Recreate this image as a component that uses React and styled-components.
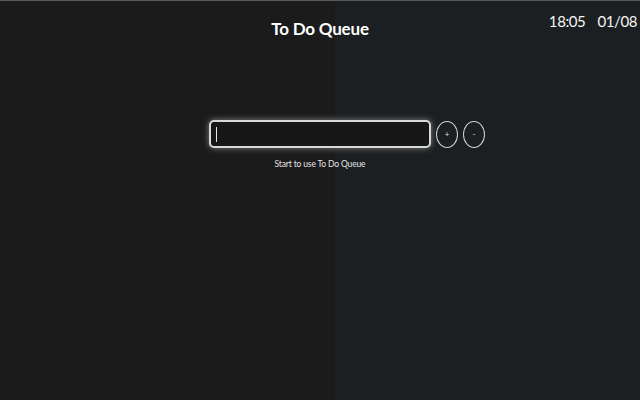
import styled, { createGlobalStyle } from "styled-components";

const GlobalStyle = createGlobalStyle`
  html, body {
    margin: 0;
    height: 100%;
  }
  body {
    background: linear-gradient(to right, #1b1b1b 0, #1b1b1b 335px, #1c1f21 335px);
    font-family: Lato, "Open Sans", sans-serif;
    color: #f2f2f2;
  }
  #root {
    height: 100%;
  }
`;

const Page = styled.div`
  height: 400px;
  box-sizing: border-box;
  border-top: 1px solid #5a5a5a;
  display: flex;
  flex-direction: column;
`;

const Header = styled.header`
  display: grid;
  grid-template-columns: 1fr auto 1fr;
  align-items: start;
  height: 48px;
`;

const Title = styled.h1`
  grid-column: 2;
  margin: 17px 0 0;
  font-size: 17px;
  font-weight: 700;
  color: #ffffff;
  letter-spacing: -0.2px;
`;

const Clock = styled.div`
  grid-column: 3;
  justify-self: end;
  display: flex;
  gap: 12px;
  margin: 11px 3px 0 0;
  font-size: 15px;
  letter-spacing: -0.4px;
  color: #f5f5f5;
`;

const Composer = styled.div`
  margin-top: 71px;
  display: grid;
  grid-template-columns: 1fr 222px 1fr;
  align-items: center;
`;

const TaskInput = styled.div`
  grid-column: 2;
  height: 28px;
  box-sizing: border-box;
  border: 2px solid #d8d8d8;
  border-radius: 5px;
  background: #171717;
  box-shadow: 0 0 6px rgba(255, 255, 255, 0.45);
  display: flex;
  align-items: center;
  padding-left: 5px;
`;

const Caret = styled.span`
  width: 1px;
  height: 15px;
  background: #e6e6e6;
`;

const Actions = styled.div`
  grid-column: 3;
  display: flex;
  gap: 5px;
  margin-left: 5px;
`;

const RoundButton = styled.button`
  width: 22px;
  height: 27px;
  padding: 0;
  border: 1px solid #d0d0d0;
  border-radius: 50%;
  background: transparent;
  color: #e0e0e0;
  font-family: Lato, sans-serif;
  font-size: 8px;
  line-height: 1;
`;

const Hint = styled.p`
  margin: 11px 0 0;
  text-align: center;
  font-size: 8.5px;
  letter-spacing: -0.15px;
  color: #e4e4e4;
`;

export default function App() {
  return (
    <>
      <GlobalStyle />
      <Page>
        <Header>
          <Title>To Do Queue</Title>
          <Clock>
            <span>18:05</span>
            <span>01/08</span>
          </Clock>
        </Header>
        <Composer>
          <TaskInput>
            <Caret />
          </TaskInput>
          <Actions>
            <RoundButton>+</RoundButton>
            <RoundButton>-</RoundButton>
          </Actions>
        </Composer>
        <Hint>Start to use To Do Queue</Hint>
      </Page>
    </>
  );
}
